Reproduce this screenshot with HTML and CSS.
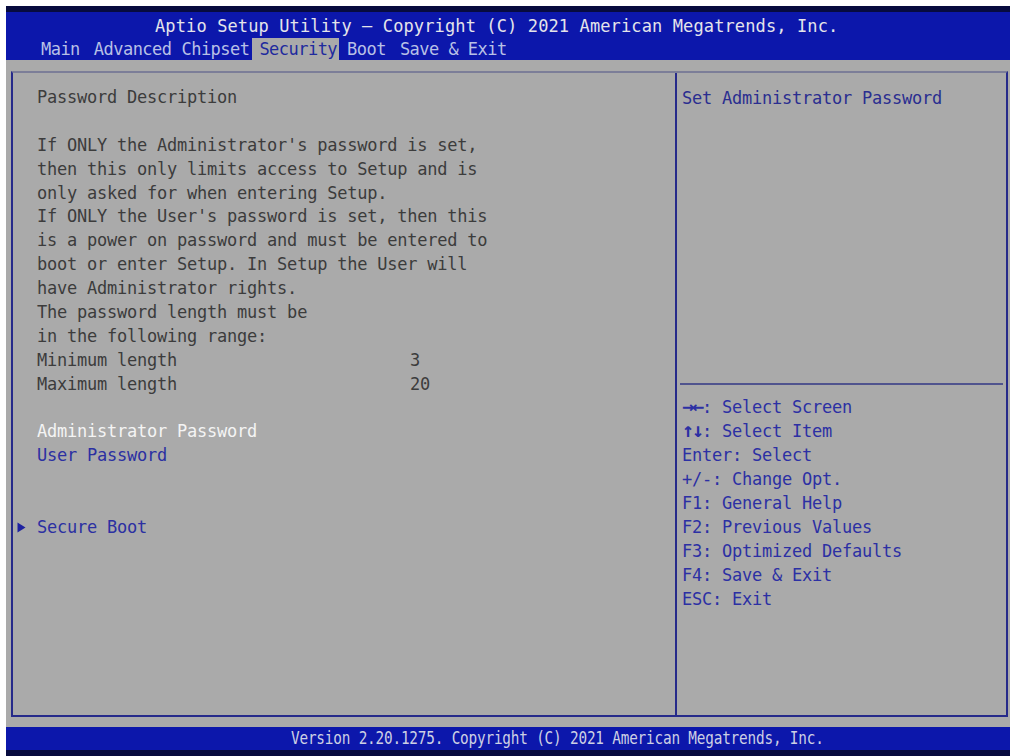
FILE: index.html
```html
<!DOCTYPE html>
<html lang="en">
<head>
<meta charset="utf-8">
<title>Aptio Setup Utility - Security</title>
<link rel="stylesheet" href="styles.css">
</head>
<body>
<div class="screen">
  <header class="top">
    <div class="title">Aptio Setup Utility – Copyright (C) 2021 American Megatrends, Inc.</div>
    <nav class="menu">
      <span class="tab short">Main</span>
      <span class="tab">Advanced</span>
      <span class="tab">Chipset</span>
      <span class="tab active">Security</span>
      <span class="tab short">Boot</span>
      <span class="tab">Save &amp; Exit</span>
    </nav>
  </header>
  <main class="body">
    <div class="frame">
      <section class="left">
        <div class="line">Password Description</div>
        <div class="line blank"></div>
        <div class="line">If ONLY the Administrator's password is set,</div>
        <div class="line">then this only limits access to Setup and is</div>
        <div class="line">only asked for when entering Setup.</div>
        <div class="line">If ONLY the User's password is set, then this</div>
        <div class="line">is a power on password and must be entered to</div>
        <div class="line">boot or enter Setup. In Setup the User will</div>
        <div class="line">have Administrator rights.</div>
        <div class="line">The password length must be</div>
        <div class="line">in the following range:</div>
        <div class="line row"><span class="label">Minimum length</span><span class="value">3</span></div>
        <div class="line row"><span class="label">Maximum length</span><span class="value">20</span></div>
        <div class="line blank"></div>
        <div class="line item selected">Administrator Password</div>
        <div class="line item">User Password</div>
        <div class="line blank"></div>
        <div class="line blank"></div>
        <div class="line item submenu"><span class="arrow"><svg width="9" height="11" viewBox="0 0 9 11"><polygon points="0.5,0.5 8.5,5.5 0.5,10.5" fill="#1e22a0"/></svg></span>Secure Boot</div>
      </section>
      <aside class="right">
        <div class="help-top">Set Administrator Password</div>
        <div class="sep"></div>
        <ul class="keys">
          <li><b class="glyph">→←</b>: Select Screen</li>
          <li><b class="glyph">↑↓</b>: Select Item</li>
          <li>Enter: Select</li>
          <li>+/-: Change Opt.</li>
          <li>F1: General Help</li>
          <li>F2: Previous Values</li>
          <li>F3: Optimized Defaults</li>
          <li>F4: Save &amp; Exit</li>
          <li>ESC: Exit</li>
        </ul>
      </aside>
    </div>
  </main>
  <footer class="bottom"><span class="version">Version 2.20.1275. Copyright (C) 2021 American Megatrends, Inc.</span></footer>
</div>
</body>
</html>
```

FILE: styles.css
```css
* { box-sizing: border-box; }

html, body {
  margin: 0;
  padding: 0;
  background: #ffffff;
}

body {
  font-family: "DejaVu Sans Mono", "Liberation Mono", monospace;
  font-size: 17px;
  letter-spacing: -0.23px;
}

.screen {
  margin: 6px 0 0 6px;
  width: 1004px;
  height: 750px;
  display: flex;
  flex-direction: column;
}

/* ---------- header ---------- */
.top {
  height: 54px;
  background: #0c17ab;
  border-top: 6px solid #070b3e;
  padding-top: 2px;
}

.title {
  height: 24px;
  line-height: 24px;
  padding-left: 149px;
  color: #e4e4ea;
  letter-spacing: 0.12px;
  white-space: nowrap;
}

.menu {
  display: flex;
  height: 22px;
  padding-left: 28px;
  gap: 1px;
  letter-spacing: -0.53px;
}

.tab {
  line-height: 22px;
  padding: 0 2px 0 7px;
  color: #b8c0e6;
  white-space: nowrap;
}

.tab.short {
  margin-right: 4px;
}

.tab.active {
  background: #aaaaaa;
  color: #1f2a9e;
}

/* ---------- body ---------- */
.body {
  height: 667px;
  background: #aaaaaa;
  padding: 11px 2px 10px 5px;
}

.frame {
  height: 100%;
  display: flex;
  border: 2px solid #262a8a;
  border-top-color: #7c7e98;
}

.left {
  width: 662px;
  padding: 13px 0 0 24px;
  color: #3c3c3c;
}

.line {
  height: 23.9px;
  line-height: 23.9px;
  white-space: nowrap;
}

.row {
  display: flex;
}

.row .label {
  width: 373px;
}

.item {
  color: #2c30a2;
}

.item.selected {
  color: #f4f4f4;
}

.submenu {
  display: flex;
  align-items: center;
  margin-left: -20px;
}

.arrow {
  width: 20px;
  display: flex;
  align-items: center;
}

.right {
  flex: 1;
  border-left: 2px solid #262a8a;
  padding: 13px 3px 0 3px;
  color: #2c30a4;
}

.help-top {
  height: 297px;
  line-height: 24px;
  padding-left: 2px;
  color: #2a2e90;
}

.sep {
  height: 2px;
  background: #50548e;
}

.keys {
  list-style: none;
  margin: 10px 0 0 0;
  padding: 0 0 0 2px;
}

.keys li {
  height: 24px;
  line-height: 24px;
  white-space: nowrap;
}

.glyph {
  font-weight: bold;
  font-size: 20px;
  letter-spacing: -2.04px;
  line-height: 20px;
}

/* ---------- footer ---------- */
.bottom {
  height: 29px;
  background: #0c17ab;
  border-bottom: 6px solid #070b3e;
  padding-left: 285px;
  display: flex;
  align-items: center;
}

.version {
  display: inline-block;
  color: #cdd0e4;
  font-size: 17px;
  letter-spacing: -0.23px;
  white-space: nowrap;
  transform: scaleX(0.845);
  transform-origin: left center;
  line-height: 23px;
}
```
